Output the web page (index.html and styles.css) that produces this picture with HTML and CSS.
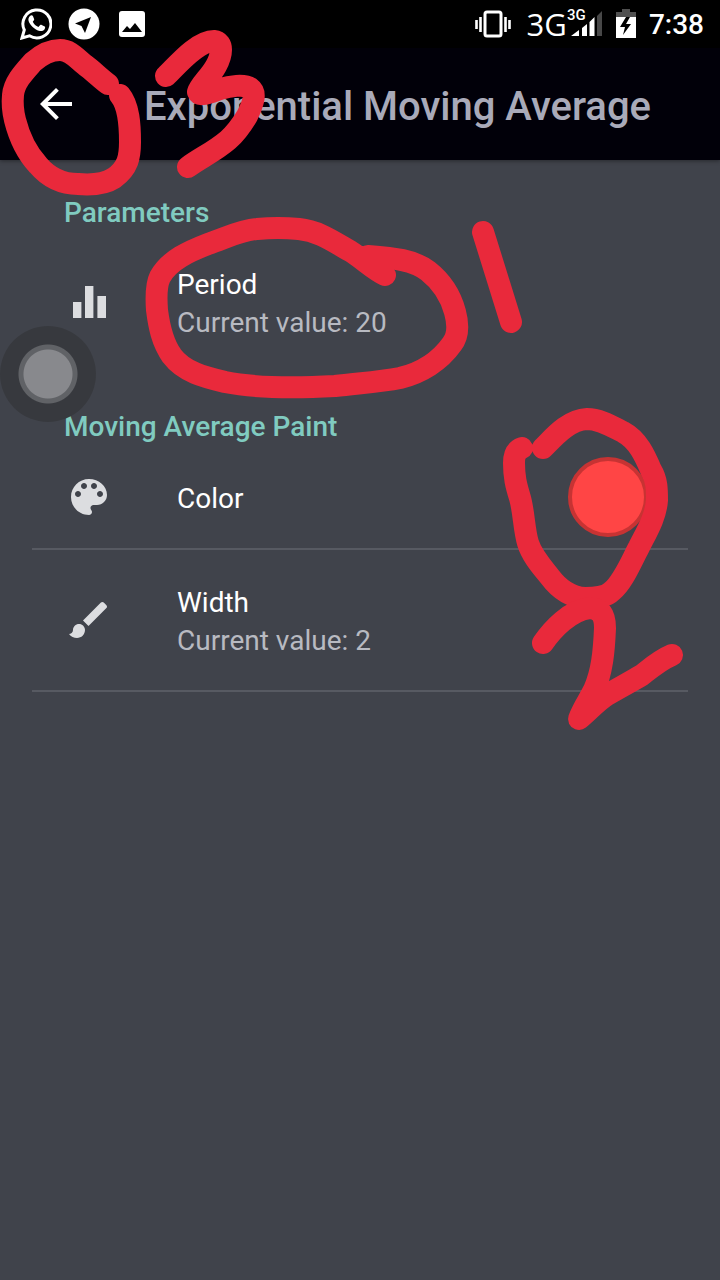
FILE: index.html
```html
<!DOCTYPE html>
<html lang="en">
<head>
<meta charset="utf-8">
<meta name="viewport" content="width=device-width, initial-scale=1">
<title>Exponential Moving Average</title>
<link rel="stylesheet" href="styles.css">
</head>
<body>
<div class="screen">
  <div class="status">
    <div class="status-left">
      <svg class="status-icon" viewBox="0 0 32 32" aria-hidden="true"><path d="M2 30l2.300-8A14 14 0 1 1 9.500 27.800z" fill="none" stroke="#fff" stroke-width="3"/><path d="M10 8c1-1 2.500-1 3 .3l1.200 3c.2.700-.8 1.700-1.400 2.400 1.200 2.500 3 4.200 5.600 5.300l1.800-2c.5-.5.9-.4 1.500-.1l3 1.500c.6.4.5 1.200.2 2-.7 2-3 3-5 2.600C14.500 21.800 9.800 17 8.600 13c-.6-2 .1-3.800 1.400-5z" fill="#fff"/></svg>
      <svg class="status-icon" viewBox="0 0 32 32" aria-hidden="true"><circle cx="16" cy="16" r="15.500" fill="#fff"/><path d="M23 9L7 15.500l6.500 2.500L17 25z" fill="#000"/></svg>
      <svg class="status-icon" viewBox="0 0 32 32" aria-hidden="true"><rect x="3" y="3" width="26" height="26" rx="3" fill="#fff"/><path d="M6 24l5-6 3 3 5-6 7 9z" fill="#000"/></svg>
    </div>
    <div class="status-right">
      <svg class="vibrate" viewBox="0 0 36 30" aria-hidden="true"><rect x="10" y="3" width="16" height="24" rx="2" fill="none" stroke="#fff" stroke-width="3"/><path d="M5.500 8v15M1.500 11v9M30.500 8v15M34.500 11v9" stroke="#fff" stroke-width="2.600"/></svg>
      <span class="network">3G</span>
      <span class="signal">
        <span class="signal-label">3G</span>
        <svg class="bars" viewBox="0 0 36 26" aria-hidden="true"><path d="M4 25l8-6v6zM15 17l5-4v12h-5zM22.500 11l5-5v19h-5z" fill="#fff"/><path d="M30 5l5-5v25h-5z" fill="#484848"/></svg>
      </span>
      <svg class="battery" viewBox="0 0 20 30" aria-hidden="true"><path d="M0 3h6V0h8v3h6v6H0z" fill="#505050"/><path d="M0 8h20v21H0z" fill="#fff"/><path d="M10 8L4 18h5l-2 8 8-11h-5l4-7z" fill="#000"/></svg>
      <time class="clock">7:38</time>
    </div>
  </div>
  <header class="appbar">
    <button class="back" type="button" aria-label="Back"><svg class="icon" viewBox="0 0 24 24" aria-hidden="true"><path d="M20 11H7.830l5.590-5.590L12 4l-8 8 8 8 1.410-1.410L7.830 13H20z" fill="#fff"/></svg></button>
    <h1 class="title">Exponential Moving Average</h1>
  </header>
  <main class="settings">
    <h2 class="heading">Parameters</h2>
    <button class="row" type="button">
      <svg class="icon" viewBox="0 0 24 24" aria-hidden="true"><path d="M4 12h4.200v8H4zM10 4h4.200v16H10zM16.200 9h4.300v11h-4.300z" fill="#dcdde0"/></svg>
      <span class="label"><span class="name">Period</span><span class="value">Current value: 20</span></span>
    </button>
    <h2 class="heading heading-next">Moving Average Paint</h2>
    <button class="row row-short row-line" type="button">
      <svg class="icon" viewBox="0 0 24 24" aria-hidden="true"><path d="M12 3c-4.970 0-9 4.030-9 9s4.030 9 9 9c.83 0 1.500-.67 1.500-1.500 0-.39-.15-.74-.39-1.010-.23-.26-.38-.61-.38-.99 0-.83.67-1.500 1.500-1.500H16c2.760 0 5-2.240 5-5 0-4.420-4.030-8-9-8zm-5.500 9c-.83 0-1.500-.67-1.500-1.500S5.670 9 6.500 9 8 9.670 8 10.500 7.330 12 6.500 12zm3-4C8.670 8 8 7.330 8 6.500S8.670 5 9.500 5s1.500.67 1.500 1.500S10.330 8 9.500 8zm5 0c-.83 0-1.500-.67-1.500-1.500S13.670 5 14.500 5s1.500.67 1.500 1.500S15.330 8 14.500 8zm3 4c-.83 0-1.500-.67-1.500-1.500S16.670 9 17.500 9s1.500.67 1.500 1.500-.67 1.500-1.500 1.500z" fill="#dcdde0"/></svg>
      <span class="label"><span class="name">Color</span></span>
      <span class="swatch"></span>
    </button>
    <button class="row row-line" type="button">
      <svg class="icon" viewBox="0 0 24 24" aria-hidden="true"><path d="M7 14c-1.660 0-3 1.340-3 3 0 1.310-1.160 2-2 2 .92 1.220 2.490 2 4 2 2.210 0 4-1.790 4-4 0-1.660-1.340-3-3-3zm13.710-9.370l-1.340-1.340c-.39-.39-1.020-.39-1.410 0L9 12.250 11.750 15l8.960-8.960c.39-.39.39-1.020 0-1.410z" fill="#dcdde0"/></svg>
      <span class="label"><span class="name">Width</span><span class="value">Current value: 2</span></span>
    </button>
  </main>
  <button class="assist" type="button" aria-label="Assistive touch"></button>
  <svg class="marks" viewBox="0 0 720 760" aria-hidden="true">
    <path d="M108 84C100 78 92 70 85 65C77 59 71 50 60 50C50 50 41 55 33 62C25 71 14 82 13 95C12 105 13 112 15 120C19 136 26 152 38 165C49 178 62 184 78 184C90 185 105 184 114 178C128 168 130 157 130 142C130 125 129 106 120 95"/>
    <path d="M166 76C174 69 196 41 214 41C224 42 222 55 216 66C210 77 200 85 198 92C200 97 211 92 220 89C230 86 244 84 250 88C257 93 253 104 247 116C241 126 236 133 228 140C214 152 200 158 188 167"/>
    <path d="M385 275C374 270 363 259 350 251C331 240 318 231 299 229Q278 227 257 229C240 230 224 239 208 244C190 251 169 260 160 277C156 285 156 296 157 310C159 326 162 342 172 356C184 372 204 377 225 382C255 388 300 388 335 386C360 383 380 382 400 378C421 373 440 361 452 344C459 335 458 323 455 312C451 297 442 282 428 271C414 260 394 258 368 256"/>
    <path d="M483 232L511 322"/>
    <path d="M543 448C554 437 568 420 587 419C600 419 613 427 623 432C638 440 645 456 651 470C657 480 657 489 657 500C656 517 646 533 639 547C631 562 623 582 612 591C606 597 598 598 585 598C570 597 559 589 550 577C542 567 532 556 528 543C524 530 524 512 520 498C516 485 514 477 514 463Q514 451 522 448"/>
    <path d="M543 643C552 630 570 610 590 608C602 609 605 617 605 628C604 652 602 672 594 690C589 700 583 708 579 719C589 711 596 702 607 695C619 688 632 681 642 675C652 667 660 660 672 655"/>
  </svg>
</div>
</body>
</html>
```
FILE: styles.css
```css
* { box-sizing: border-box; }
body {
  margin: 0;
  background: #40434b;
  font-family: Roboto, "Noto Sans", sans-serif;
}
button {
  border: 0;
  padding: 0;
  background: none;
  color: inherit;
  font: inherit;
  text-align: left;
}
svg { display: block; flex: none; }
.screen { position: relative; min-height: 100vh; overflow: hidden; }

.status {
  display: flex;
  justify-content: space-between;
  align-items: center;
  height: 48px;
  padding: 0 16px 0 20px;
  background: #000;
  color: #fff;
}
.status-left { display: flex; gap: 16px; }
.status-icon { width: 32px; height: 32px; }
.status-right { display: flex; align-items: center; }
.vibrate { width: 36px; height: 30px; margin-right: 16px; }
.network { font: 31px/48px "Open Sans", "Noto Sans", sans-serif; }
.signal { position: relative; }
.signal-label {
  position: absolute;
  top: -4px;
  left: 0;
  font-size: 15px;
  font-weight: 500;
  line-height: 16px;
}
.bars { width: 36px; height: 26px; }
.battery { width: 20px; height: 30px; margin: 0 13px; }
.clock { font-size: 28px; font-weight: 500; line-height: 48px; padding-top: 2px; }

.appbar {
  display: flex;
  align-items: center;
  height: 112px;
  padding: 0 32px;
  background: #010009;
  box-shadow: 0 1px 4px rgba(0, 0, 0, .4);
}
.back { margin-right: 64px; }
.icon { width: 48px; height: 48px; }
.title {
  margin: 0;
  padding-top: 6px;
  color: #a9aab9;
  font-size: 40px;
  font-weight: 500;
  line-height: 48px;
  white-space: nowrap;
}

.settings { padding: 35px 32px; }
.heading {
  margin: 0;
  padding: 0 32px;
  color: #80cbc0;
  font-size: 28px;
  font-weight: 500;
  line-height: 36px;
}
.heading-next { margin-top: 36px; }
.row {
  display: flex;
  align-items: center;
  width: 100%;
  min-height: 142px;
  padding: 0 40px 0 33px;
  color: #fff;
}
.row-short { min-height: 105px; }
.row-line { border-bottom: 2px solid #575a62; }
.label {
  display: flex;
  flex: 1;
  flex-direction: column;
  margin-left: 64px;
  padding-top: 4px;
  font-size: 28px;
  line-height: 38px;
}
.value { color: #b8bac1; }
.swatch {
  width: 80px;
  height: 80px;
  border: 4px solid #c73333;
  border-radius: 50%;
  background: #ff4545;
}

.assist {
  position: absolute;
  top: 326px;
  left: 0;
  width: 96px;
  height: 96px;
  border-radius: 50%;
  background: radial-gradient(circle, #88898d 0 24px, #606266 25px 29px, #37393e 30px);
}
.marks {
  position: absolute;
  top: 0;
  left: 0;
  width: 100%;
  fill: none;
  stroke: #e9293b;
  stroke-width: 22px;
  stroke-linecap: round;
  stroke-linejoin: round;
  pointer-events: none;
}
```
